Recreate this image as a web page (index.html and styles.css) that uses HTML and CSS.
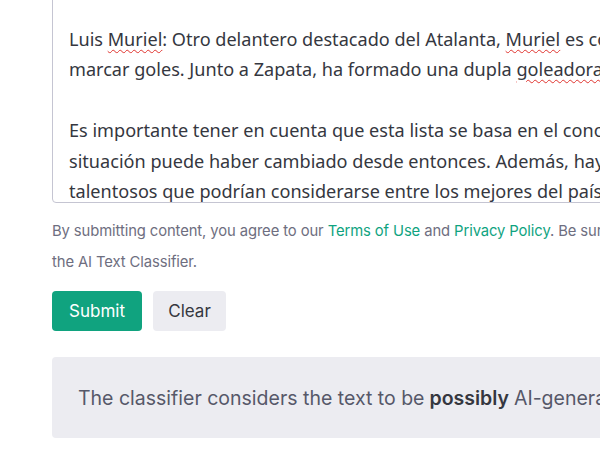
FILE: index.html
```html
<!DOCTYPE html>
<html lang="es">
<head>
<meta charset="utf-8">
<link rel="stylesheet" href="styles.css">
</head>
<body>
<main class="page">
  <div class="editor">
    <div class="editor-text">
      <div class="line">&nbsp;</div>
      <div class="line">Luis <span class="spell">Muriel</span>: Otro delantero destacado del Atalanta, <span class="spell">Muriel</span> es conocido por su habilidad para</div>
      <div class="line">marcar goles. Junto a Zapata, ha formado una dupla <span class="spell">goleadora</span> en el equipo.</div>
      <div class="line">&nbsp;</div>
      <div class="line">Es importante tener en cuenta que esta lista se basa en el conocimiento hasta septiembre de 2021 y la</div>
      <div class="line">situación puede haber cambiado desde entonces. Además, hay otros jugadores colombianos</div>
      <div class="line">talentosos que podrían considerarse entre los mejores del país.</div>
    </div>
  </div>
  <p class="terms">By submitting content, you agree to our <a href="#">Terms of Use</a> and <a href="#">Privacy Policy</a>. Be sure you have appropriate rights to the content before using<br>the AI Text Classifier.</p>
  <div class="actions">
    <button class="btn btn-primary" type="button">Submit</button>
    <button class="btn btn-secondary" type="button">Clear</button>
  </div>
  <div class="result">The classifier considers the text to be <strong>possibly</strong> AI-generated.</div>
</main>
</body>
</html>
```

FILE: styles.css
```css
html, body {
  margin: 0;
  padding: 0;
  background: #ffffff;
  overflow: hidden;
}
body {
  width: 600px;
  height: 455px;
}
.page {
  padding-left: 52px;
  width: 900px;
  font-family: Inter, "Noto Sans", sans-serif;
}
.editor {
  margin-top: -8px;
  height: 209px;
  border: 1px solid #c5c5d2;
  border-radius: 4px;
  overflow: hidden;
  box-sizing: content-box;
  padding: 0 16px;
}
.editor-text {
  font-family: "Noto Sans", "Open Sans", sans-serif;
  font-size: 18.1px;
  line-height: 30.5px;
  color: #353740;
  white-space: nowrap;
}
.spell {
  text-decoration: underline wavy #e0342f;
  text-decoration-thickness: 1px;
  text-underline-offset: 3px;
}
.terms {
  margin: 13px 0 0;
  font-size: 14.8px;
  line-height: 31px;
  color: #6e6e80;
  white-space: nowrap;
  letter-spacing: -0.1px;
}
.terms a {
  color: #10a37f;
  text-decoration: none;
}
.actions {
  display: flex;
  gap: 11px;
  margin-top: 13px;
}
.btn {
  height: 40px;
  border: none;
  border-radius: 4px;
  font-family: Inter, sans-serif;
  font-size: 17px;
  padding: 0;
  cursor: pointer;
}
.btn-primary {
  width: 90px;
  background: #10a37f;
  color: #ffffff;
}
.btn-secondary {
  width: 73px;
  background: #ececf1;
  color: #353740;
}
.result {
  margin-top: 26px;
  height: 81px;
  box-sizing: border-box;
  padding: 0 24px 0 26px;
  display: flex;
  align-items: center;
  background: #ececf1;
  border-radius: 4px;
  font-size: 19.5px;
  color: #565869;
  white-space: nowrap;
}
.result strong {
  color: #353740;
  font-weight: 600;
  margin: 0 5px;
}
```
